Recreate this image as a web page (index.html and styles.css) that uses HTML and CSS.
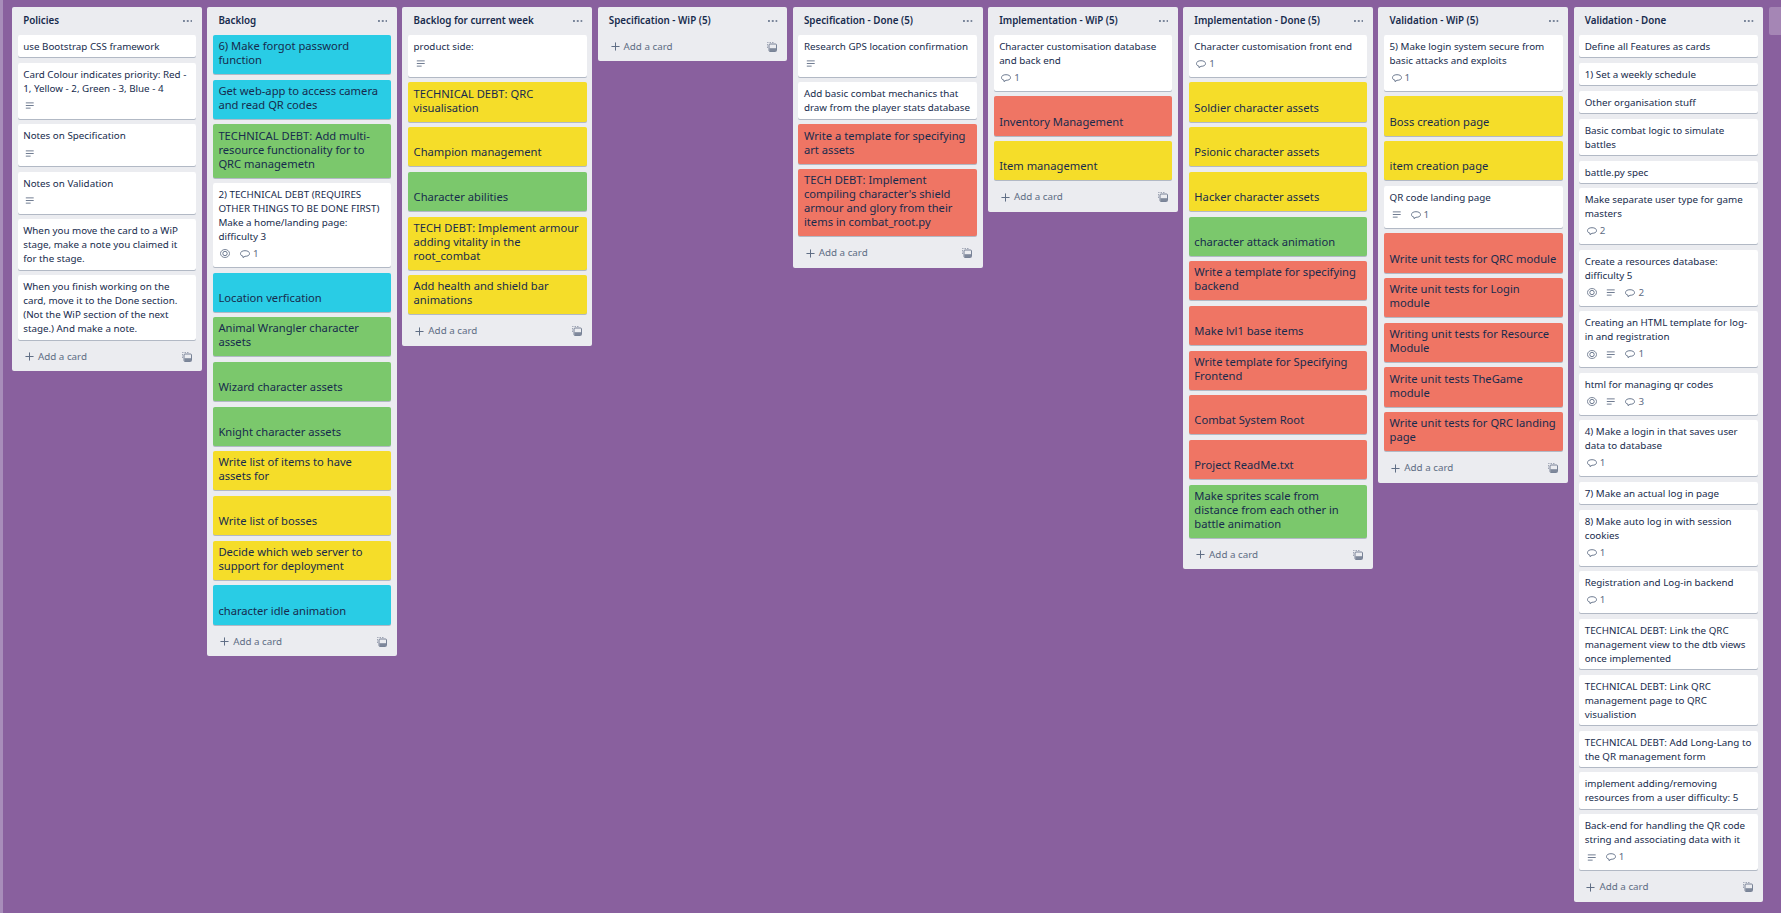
FILE: index.html
```html
<!DOCTYPE html>
<html lang="en">
<head>
    <meta charset="UTF-8">
    <meta name="viewport" content="width=device-width, initial-scale=1.0">
    <title>Project board</title>
    <link rel="stylesheet" href="styles.css">
</head>
<body>
    <svg class="sprite" width="0" height="0">
        <symbol id="i-lines" viewBox="0 0 10 8"><path d="M.5 1h9M.5 4h9M.5 7h5.5" fill="none" stroke="currentColor" stroke-width="1"/></symbol>
        <symbol id="i-eye" viewBox="0 0 10 9"><ellipse cx="5" cy="4.500" rx="4.500" ry="4" fill="none" stroke="currentColor" stroke-width=".8"/><circle cx="5" cy="4.500" r="2.200" fill="none" stroke="currentColor" stroke-width=".9"/></symbol>
        <symbol id="i-comment" viewBox="0 0 10 8"><path d="M3 6.200C1.500 5.900.5 5 .5 3.600.5 1.800 2.300.7 5 .7s4.500 1.100 4.500 2.900S7.700 6.300 5 6.300L3 7.600z" fill="none" stroke="currentColor" stroke-width=".9" stroke-linejoin="round"/></symbol>
        <symbol id="i-plus" viewBox="0 0 10 10"><path d="M5 .5v9M.5 5h9" fill="none" stroke="currentColor" stroke-width="1.100"/></symbol>
        <symbol id="i-template" viewBox="0 0 10 10"><path d="M.5 6V.5h6.500" fill="none" stroke="currentColor" stroke-width="1" stroke-dasharray="1.500 1" opacity=".6"/><rect x="2" y="2" width="7.500" height="7.500" rx="1" fill="none" stroke="currentColor" stroke-width=".9"/><path d="M2.500 6.200h6.500v2.800h-6.500z" fill="currentColor" opacity=".85"/></symbol>
        <symbol id="i-dots" viewBox="0 0 10 2"><path d="M0 0h2v2H0zM4 0h2v2H4zM8 0h2v2H8z" fill="currentColor"/></symbol>
    </svg>

    <div class="board">

        <section class="list">
            <header class="list-head"><h2>Policies</h2><svg class="dots"><use href="#i-dots"/></svg></header>
            <div class="card">use Bootstrap CSS framework</div>
            <div class="card">Card Colour indicates priority: Red - 1, Yellow - 2, Green - 3, Blue - 4
                <div class="badges"><span class="badge"><svg class="ic-lines"><use href="#i-lines"/></svg></span></div>
            </div>
            <div class="card">Notes on Specification
                <div class="badges"><span class="badge"><svg class="ic-lines"><use href="#i-lines"/></svg></span></div>
            </div>
            <div class="card">Notes on Validation
                <div class="badges"><span class="badge"><svg class="ic-lines"><use href="#i-lines"/></svg></span></div>
            </div>
            <div class="card">When you move the card to a WiP stage, make a note you claimed it for the stage.</div>
            <div class="card">When you finish working on the card, move it to the Done section. (Not the WiP section of the next stage.) And make a note.</div>
            <footer class="list-foot"><svg class="plus"><use href="#i-plus"/></svg><span>Add a card</span><svg class="tpl"><use href="#i-template"/></svg></footer>
        </section>

        <section class="list">
            <header class="list-head"><h2>Backlog</h2><svg class="dots"><use href="#i-dots"/></svg></header>
            <div class="cover blue">6) Make forgot password function</div>
            <div class="cover blue">Get web-app to access camera and read QR codes</div>
            <div class="cover green">TECHNICAL DEBT: Add multi-resource functionality for to QRC managemetn</div>
            <div class="card">2) TECHNICAL DEBT (REQUIRES OTHER THINGS TO BE DONE FIRST) Make a home/landing page: difficulty 3
                <div class="badges">
                    <span class="badge"><svg class="ic-eye"><use href="#i-eye"/></svg></span>
                    <span class="badge"><svg class="ic-comment"><use href="#i-comment"/></svg><span class="count">1</span></span>
                </div>
            </div>
            <div class="cover blue">Location verfication</div>
            <div class="cover green">Animal Wrangler character assets</div>
            <div class="cover green">Wizard character assets</div>
            <div class="cover green">Knight character assets</div>
            <div class="cover yellow">Write list of items to have assets for</div>
            <div class="cover yellow">Write list of bosses</div>
            <div class="cover yellow">Decide which web server to support for deployment</div>
            <div class="cover blue">character idle animation</div>
            <footer class="list-foot"><svg class="plus"><use href="#i-plus"/></svg><span>Add a card</span><svg class="tpl"><use href="#i-template"/></svg></footer>
        </section>

        <section class="list">
            <header class="list-head"><h2>Backlog for current week</h2><svg class="dots"><use href="#i-dots"/></svg></header>
            <div class="card">product side:
                <div class="badges"><span class="badge"><svg class="ic-lines"><use href="#i-lines"/></svg></span></div>
            </div>
            <div class="cover yellow">TECHNICAL DEBT: QRC visualisation</div>
            <div class="cover yellow">Champion management</div>
            <div class="cover green">Character abilities</div>
            <div class="cover yellow">TECH DEBT: Implement armour adding vitality in the root_combat</div>
            <div class="cover yellow">Add health and shield bar animations</div>
            <footer class="list-foot"><svg class="plus"><use href="#i-plus"/></svg><span>Add a card</span><svg class="tpl"><use href="#i-template"/></svg></footer>
        </section>

        <section class="list">
            <header class="list-head"><h2>Specification - WiP (5)</h2><svg class="dots"><use href="#i-dots"/></svg></header>
            <footer class="list-foot"><svg class="plus"><use href="#i-plus"/></svg><span>Add a card</span><svg class="tpl"><use href="#i-template"/></svg></footer>
        </section>

        <section class="list">
            <header class="list-head"><h2>Specification - Done (5)</h2><svg class="dots"><use href="#i-dots"/></svg></header>
            <div class="card">Research GPS location confirmation
                <div class="badges"><span class="badge"><svg class="ic-lines"><use href="#i-lines"/></svg></span></div>
            </div>
            <div class="card">Add basic combat mechanics that draw from the player stats database</div>
            <div class="cover red">Write a template for specifying art assets</div>
            <div class="cover red">TECH DEBT: Implement compiling character's shield armour and glory from their items in combat_root.py</div>
            <footer class="list-foot"><svg class="plus"><use href="#i-plus"/></svg><span>Add a card</span><svg class="tpl"><use href="#i-template"/></svg></footer>
        </section>

        <section class="list">
            <header class="list-head"><h2>Implementation - WiP (5)</h2><svg class="dots"><use href="#i-dots"/></svg></header>
            <div class="card">Character customisation database and back end
                <div class="badges"><span class="badge"><svg class="ic-comment"><use href="#i-comment"/></svg><span class="count">1</span></span></div>
            </div>
            <div class="cover red">Inventory Management</div>
            <div class="cover yellow">Item management</div>
            <footer class="list-foot"><svg class="plus"><use href="#i-plus"/></svg><span>Add a card</span><svg class="tpl"><use href="#i-template"/></svg></footer>
        </section>

        <section class="list">
            <header class="list-head"><h2>Implementation - Done (5)</h2><svg class="dots"><use href="#i-dots"/></svg></header>
            <div class="card">Character customisation front end
                <div class="badges"><span class="badge"><svg class="ic-comment"><use href="#i-comment"/></svg><span class="count">1</span></span></div>
            </div>
            <div class="cover yellow">Soldier character assets</div>
            <div class="cover yellow">Psionic character assets</div>
            <div class="cover yellow">Hacker character assets</div>
            <div class="cover green">character attack animation</div>
            <div class="cover red">Write a template for specifying backend</div>
            <div class="cover red">Make lvl1 base items</div>
            <div class="cover red">Write template for Specifying Frontend</div>
            <div class="cover red">Combat System Root</div>
            <div class="cover red">Project ReadMe.txt</div>
            <div class="cover green">Make sprites scale from distance from each other in battle animation</div>
            <footer class="list-foot"><svg class="plus"><use href="#i-plus"/></svg><span>Add a card</span><svg class="tpl"><use href="#i-template"/></svg></footer>
        </section>

        <section class="list">
            <header class="list-head"><h2>Validation - WiP (5)</h2><svg class="dots"><use href="#i-dots"/></svg></header>
            <div class="card">5) Make login system secure from basic attacks and exploits
                <div class="badges"><span class="badge"><svg class="ic-comment"><use href="#i-comment"/></svg><span class="count">1</span></span></div>
            </div>
            <div class="cover yellow">Boss creation page</div>
            <div class="cover yellow">item creation page</div>
            <div class="card">QR code landing page
                <div class="badges">
                    <span class="badge"><svg class="ic-lines"><use href="#i-lines"/></svg></span>
                    <span class="badge"><svg class="ic-comment"><use href="#i-comment"/></svg><span class="count">1</span></span>
                </div>
            </div>
            <div class="cover red">Write unit tests for QRC module</div>
            <div class="cover red">Write unit tests for Login module</div>
            <div class="cover red">Writing unit tests for Resource Module</div>
            <div class="cover red">Write unit tests TheGame module</div>
            <div class="cover red">Write unit tests for QRC landing page</div>
            <footer class="list-foot"><svg class="plus"><use href="#i-plus"/></svg><span>Add a card</span><svg class="tpl"><use href="#i-template"/></svg></footer>
        </section>

        <section class="list">
            <header class="list-head"><h2>Validation - Done</h2><svg class="dots"><use href="#i-dots"/></svg></header>
            <div class="card">Define all Features as cards</div>
            <div class="card">1) Set a weekly schedule</div>
            <div class="card">Other organisation stuff</div>
            <div class="card">Basic combat logic to simulate battles</div>
            <div class="card">battle.py spec</div>
            <div class="card">Make separate user type for game masters
                <div class="badges"><span class="badge"><svg class="ic-comment"><use href="#i-comment"/></svg><span class="count">2</span></span></div>
            </div>
            <div class="card">Create a resources database: difficulty 5
                <div class="badges">
                    <span class="badge"><svg class="ic-eye"><use href="#i-eye"/></svg></span>
                    <span class="badge"><svg class="ic-lines"><use href="#i-lines"/></svg></span>
                    <span class="badge"><svg class="ic-comment"><use href="#i-comment"/></svg><span class="count">2</span></span>
                </div>
            </div>
            <div class="card">Creating an HTML template for log-in and registration
                <div class="badges">
                    <span class="badge"><svg class="ic-eye"><use href="#i-eye"/></svg></span>
                    <span class="badge"><svg class="ic-lines"><use href="#i-lines"/></svg></span>
                    <span class="badge"><svg class="ic-comment"><use href="#i-comment"/></svg><span class="count">1</span></span>
                </div>
            </div>
            <div class="card">html for managing qr codes
                <div class="badges">
                    <span class="badge"><svg class="ic-eye"><use href="#i-eye"/></svg></span>
                    <span class="badge"><svg class="ic-lines"><use href="#i-lines"/></svg></span>
                    <span class="badge"><svg class="ic-comment"><use href="#i-comment"/></svg><span class="count">3</span></span>
                </div>
            </div>
            <div class="card">4) Make a login in that saves user data to database
                <div class="badges"><span class="badge"><svg class="ic-comment"><use href="#i-comment"/></svg><span class="count">1</span></span></div>
            </div>
            <div class="card">7) Make an actual log in page</div>
            <div class="card">8) Make auto log in with session cookies
                <div class="badges"><span class="badge"><svg class="ic-comment"><use href="#i-comment"/></svg><span class="count">1</span></span></div>
            </div>
            <div class="card">Registration and Log-in backend
                <div class="badges"><span class="badge"><svg class="ic-comment"><use href="#i-comment"/></svg><span class="count">1</span></span></div>
            </div>
            <div class="card">TECHNICAL DEBT: Link the QRC management view to the dtb views once implemented</div>
            <div class="card">TECHNICAL DEBT: Link QRC management page to QRC visualistion</div>
            <div class="card">TECHNICAL DEBT: Add Long-Lang to the QR management form</div>
            <div class="card">implement adding/removing resources from a user difficulty: 5</div>
            <div class="card">Back-end for handling the QR code string and associating data with it
                <div class="badges">
                    <span class="badge"><svg class="ic-lines"><use href="#i-lines"/></svg></span>
                    <span class="badge"><svg class="ic-comment"><use href="#i-comment"/></svg><span class="count">1</span></span>
                </div>
            </div>
            <footer class="list-foot"><svg class="plus"><use href="#i-plus"/></svg><span>Add a card</span><svg class="tpl"><use href="#i-template"/></svg></footer>
        </section>

        <div class="list-ghost"></div>
    </div>
</body>
</html>
```

FILE: styles.css
```css
:root {
    --board: #89609e;
    --list: #ebecf0;
    --ink: #172b4d;
    --muted: #5e6c84;
    --red: #ef7564;
    --yellow: #f5dd29;
    --green: #7bc86c;
    --blue: #29cce5;
}

* {
    box-sizing: border-box;
    margin: 0;
    padding: 0;
}

html,
body {
    height: 100%;
}

body {
    background: var(--board);
    border-left: 3px solid #a88dba;
    color: var(--ink);
    font-family: "Noto Sans", sans-serif;
    font-size: 9.8px;
    line-height: 14px;
    overflow: hidden;
}

.sprite {
    position: absolute;
}

.board {
    display: flex;
    align-items: flex-start;
    gap: 5.4px;
    padding: 7px 0 0 9px;
}

.list {
    flex: 0 0 189.8px;
    background: var(--list);
    border-radius: 2px;
    padding: 0 5.6px;
}

.list-ghost {
    flex: 0 0 190px;
    height: 28px;
    background: rgba(255, 255, 255, 0.24);
    border-radius: 2px;
}

.list-head {
    display: flex;
    align-items: center;
    justify-content: space-between;
    height: 28px;
    padding: 0 4px 0 5.6px;
}

.list-head h2 {
    font-size: 9.8px;
    font-weight: 600;
    line-height: 14px;
}

.dots {
    width: 9.5px;
    height: 2px;
    color: #7a869a;
}

.card,
.cover {
    margin-bottom: 5.5px;
    border-radius: 2px;
    box-shadow: 0 1px 0 rgba(9, 30, 66, 0.25);
}

.card {
    background: #fff;
    padding: 5px 5.6px 3.4px;
}

.cover {
    display: flex;
    align-items: flex-end;
    min-height: 39.2px;
    padding: 4.2px 5.6px 7px;
    font-size: 11.2px;
}

.red {
    background: var(--red);
}

.yellow {
    background: var(--yellow);
}

.green {
    background: var(--green);
}

.blue {
    background: var(--blue);
}

.badges {
    display: flex;
    gap: 5.6px;
    margin-top: 2.8px;
    margin-bottom: 2.8px;
    color: var(--muted);
}

.badge {
    display: flex;
    align-items: center;
    height: 14px;
}

.badge svg {
    display: block;
    flex: none;
    margin: 0 2px;
}

.ic-lines {
    width: 9.5px;
    height: 7px;
}

.ic-eye {
    width: 10px;
    height: 9px;
}

.ic-comment {
    width: 10px;
    height: 8px;
}

.count {
    margin-left: 1px;
    font-size: 9.8px;
}

.list-foot {
    display: flex;
    align-items: center;
    height: 26px;
    padding: 0 4.5px 3px 7.4px;
    color: var(--muted);
}

.plus {
    width: 9px;
    height: 9px;
    margin-right: 4px;
}

.tpl {
    width: 10px;
    height: 10px;
    margin-left: auto;
    color: #6b778c;
}
```
